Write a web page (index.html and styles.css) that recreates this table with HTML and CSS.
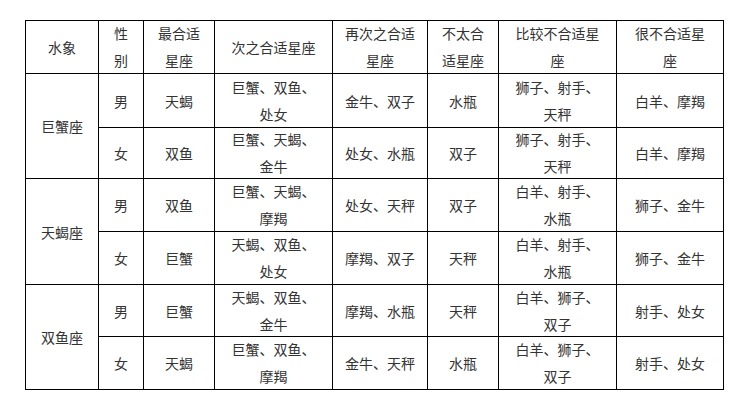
FILE: index.html
```html
<!DOCTYPE html>
<html lang="zh-CN">
<head>
<meta charset="utf-8">
<link rel="stylesheet" href="styles.css">
</head>
<body>
<div class="page">
<table class="match">
<colgroup>
<col class="c1"><col class="c2"><col class="c3"><col class="c4"><col class="c5"><col class="c6"><col class="c7"><col class="c8">
</colgroup>
<tr class="r0">
<td>水象</td><td><div class="t">性<br>别</div></td><td><div class="t">最合适<br>星座</div></td><td>次之合适星座</td><td><div class="t">再次之合适<br>星座</div></td><td><div class="t">不太合<br>适星座</div></td><td><div class="t">比较不合适星<br>座</div></td><td><div class="t">很不合适星<br>座</div></td>
</tr>
<tr class="r1">
<td rowspan="2">巨蟹座</td><td>男</td><td>天蝎</td><td><div class="t">巨蟹、双鱼、<br>处女</div></td><td>金牛、双子</td><td>水瓶</td><td><div class="t">狮子、射手、<br>天秤</div></td><td>白羊、摩羯</td>
</tr>
<tr class="r2">
<td>女</td><td>双鱼</td><td><div class="t">巨蟹、天蝎、<br>金牛</div></td><td>处女、水瓶</td><td>双子</td><td><div class="t">狮子、射手、<br>天秤</div></td><td>白羊、摩羯</td>
</tr>
<tr class="r3">
<td rowspan="2">天蝎座</td><td>男</td><td>双鱼</td><td><div class="t">巨蟹、天蝎、<br>摩羯</div></td><td>处女、天秤</td><td>双子</td><td><div class="t">白羊、射手、<br>水瓶</div></td><td>狮子、金牛</td>
</tr>
<tr class="r4">
<td>女</td><td>巨蟹</td><td><div class="t">天蝎、双鱼、<br>处女</div></td><td>摩羯、双子</td><td>天秤</td><td><div class="t">白羊、射手、<br>水瓶</div></td><td>狮子、金牛</td>
</tr>
<tr class="r5">
<td rowspan="2">双鱼座</td><td>男</td><td>巨蟹</td><td><div class="t">天蝎、双鱼、<br>金牛</div></td><td>摩羯、水瓶</td><td>天秤</td><td><div class="t">白羊、狮子、<br>双子</div></td><td>射手、处女</td>
</tr>
<tr class="r6">
<td>女</td><td>天蝎</td><td><div class="t">巨蟹、双鱼、<br>摩羯</div></td><td>金牛、天秤</td><td>水瓶</td><td><div class="t">白羊、狮子、<br>双子</div></td><td>射手、处女</td>
</tr>
</table>
</div>
</body>
</html>
```

FILE: styles.css
```css
html, body {
  margin: 0;
  padding: 0;
  background: #ffffff;
}
.page {
  padding: 20px 0 0 25px;
}
.match {
  border-collapse: collapse;
  table-layout: fixed;
  width: 698px;
  font-family: "Noto Sans CJK SC", "Noto Sans", sans-serif;
  font-size: 14px;
  line-height: 20px;
  color: #333333;
}
.match td {
  border: 1px solid #000000;
  padding: 0;
  text-align: center;
  vertical-align: middle;
  white-space: nowrap;
  overflow: hidden;
}
.t {
  line-height: 27px;
  margin: -4px 0;
}
.c1 { width: 73px; }
.c2 { width: 45px; }
.c3 { width: 71px; }
.c4 { width: 118px; }
.c5 { width: 95px; }
.c6 { width: 71px; }
.c7 { width: 118px; }
.c8 { width: 107px; }
.r0 { height: 53px; }
.r1 { height: 54px; }
.r2 { height: 51px; }
.r3 { height: 53px; }
.r4 { height: 53px; }
.r5 { height: 52px; }
.r6 { height: 53px; }
```
